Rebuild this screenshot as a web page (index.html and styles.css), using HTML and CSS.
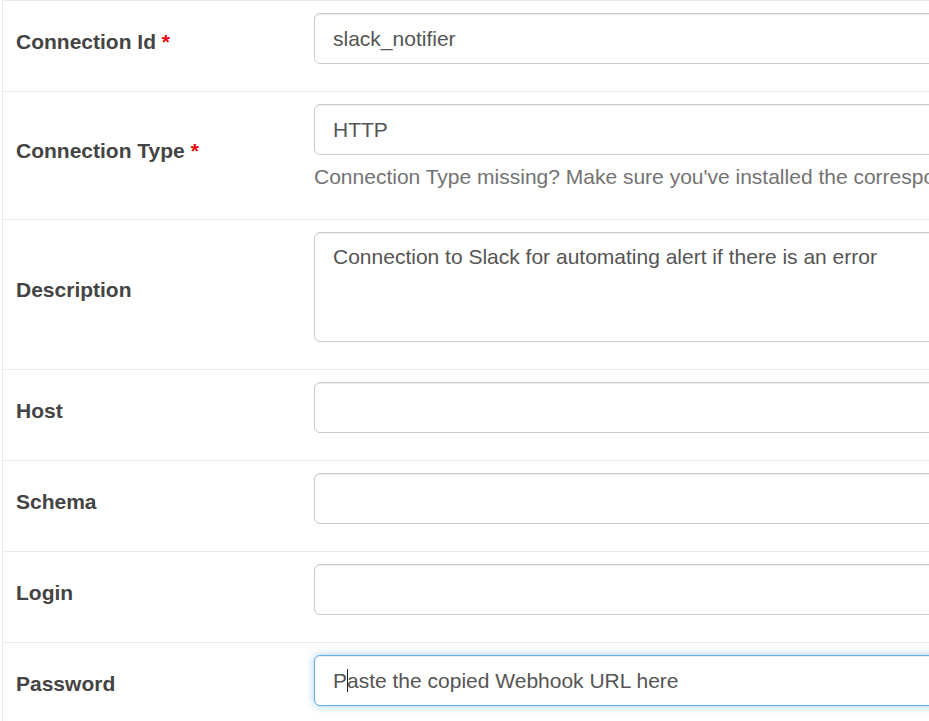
FILE: index.html
```html
<!DOCTYPE html>
<html>
<head>
<meta charset="utf-8">
<link rel="stylesheet" href="styles.css">
</head>
<body>
<table class="form-table">
  <tr>
    <td class="label-cell"><label>Connection Id <span class="req">*</span></label></td>
    <td class="field-cell"><input class="control" type="text" value="slack_notifier"></td>
  </tr>
  <tr>
    <td class="label-cell"><label>Connection Type <span class="req">*</span></label></td>
    <td class="field-cell">
      <div class="control select-like">HTTP</div>
      <p class="help">Connection Type missing? Make sure you've installed the corresponding Airflow Provider Package.</p>
    </td>
  </tr>
  <tr>
    <td class="label-cell"><label>Description</label></td>
    <td class="field-cell"><textarea class="control area">Connection to Slack for automating alert if there is an error</textarea></td>
  </tr>
  <tr>
    <td class="label-cell"><label>Host</label></td>
    <td class="field-cell"><input class="control" type="text" value=""></td>
  </tr>
  <tr>
    <td class="label-cell"><label>Schema</label></td>
    <td class="field-cell"><input class="control" type="text" value=""></td>
  </tr>
  <tr>
    <td class="label-cell"><label>Login</label></td>
    <td class="field-cell"><input class="control" type="text" value=""></td>
  </tr>
  <tr>
    <td class="label-cell"><label>Password</label></td>
    <td class="field-cell">
      <div class="caret-wrap">
        <input class="control focused" type="text" value="Paste the copied Webhook URL here">
        <span class="caret"></span>
      </div>
    </td>
  </tr>
</table>
</body>
</html>
```

FILE: styles.css
```css
html, body {
  margin: 0;
  padding: 0;
  background: #fff;
  overflow: hidden;
}
body {
  font-family: "Liberation Sans", Arial, sans-serif;
  font-size: 21px;
  color: #333;
}
.form-table {
  border-collapse: collapse;
  margin-left: 2px;
  width: 1400px;
  table-layout: fixed;
}
.form-table td {
  border-top: 1px solid #ebebeb;
  border-left: 1px solid #ebebeb;
}
.label-cell {
  width: 286px;
  padding: 0 0 0 13px;
  vertical-align: middle;
}
.field-cell {
  border-left: none !important;
  padding: 12px 0 27px 12px;
  vertical-align: top;
}
label {
  display: inline-block;
  font-weight: bold;
  margin-bottom: 9px;
  color: #444;
  line-height: 28px;
}
.req {
  color: #e00;
}
.control {
  display: block;
  box-sizing: border-box;
  width: 1000px;
  height: 51px;
  margin: 0;
  padding: 0 18px;
  font-family: "Liberation Sans", Arial, sans-serif;
  font-size: 21px;
  color: #555;
  background: #fff;
  border: 1px solid #ccc;
  border-radius: 6px;
  box-shadow: inset 0 1px 1px rgba(0,0,0,0.075);
  outline: none;
}
.select-like {
  line-height: 49px;
}
.area {
  height: 110px;
  padding: 10px 18px;
  line-height: 28px;
  resize: none;
}
.help {
  margin: 7px 0 0 0;
  color: #737373;
  line-height: 30px;
  white-space: nowrap;
}
.focused {
  border-color: #66afe9;
  box-shadow: inset 0 1px 1px rgba(0,0,0,0.075), 0 0 8px rgba(102,175,233,0.6);
}
.caret-wrap {
  position: relative;
}
.caret {
  position: absolute;
  left: 33px;
  top: 14px;
  width: 1px;
  height: 23px;
  background: #222;
}
```
